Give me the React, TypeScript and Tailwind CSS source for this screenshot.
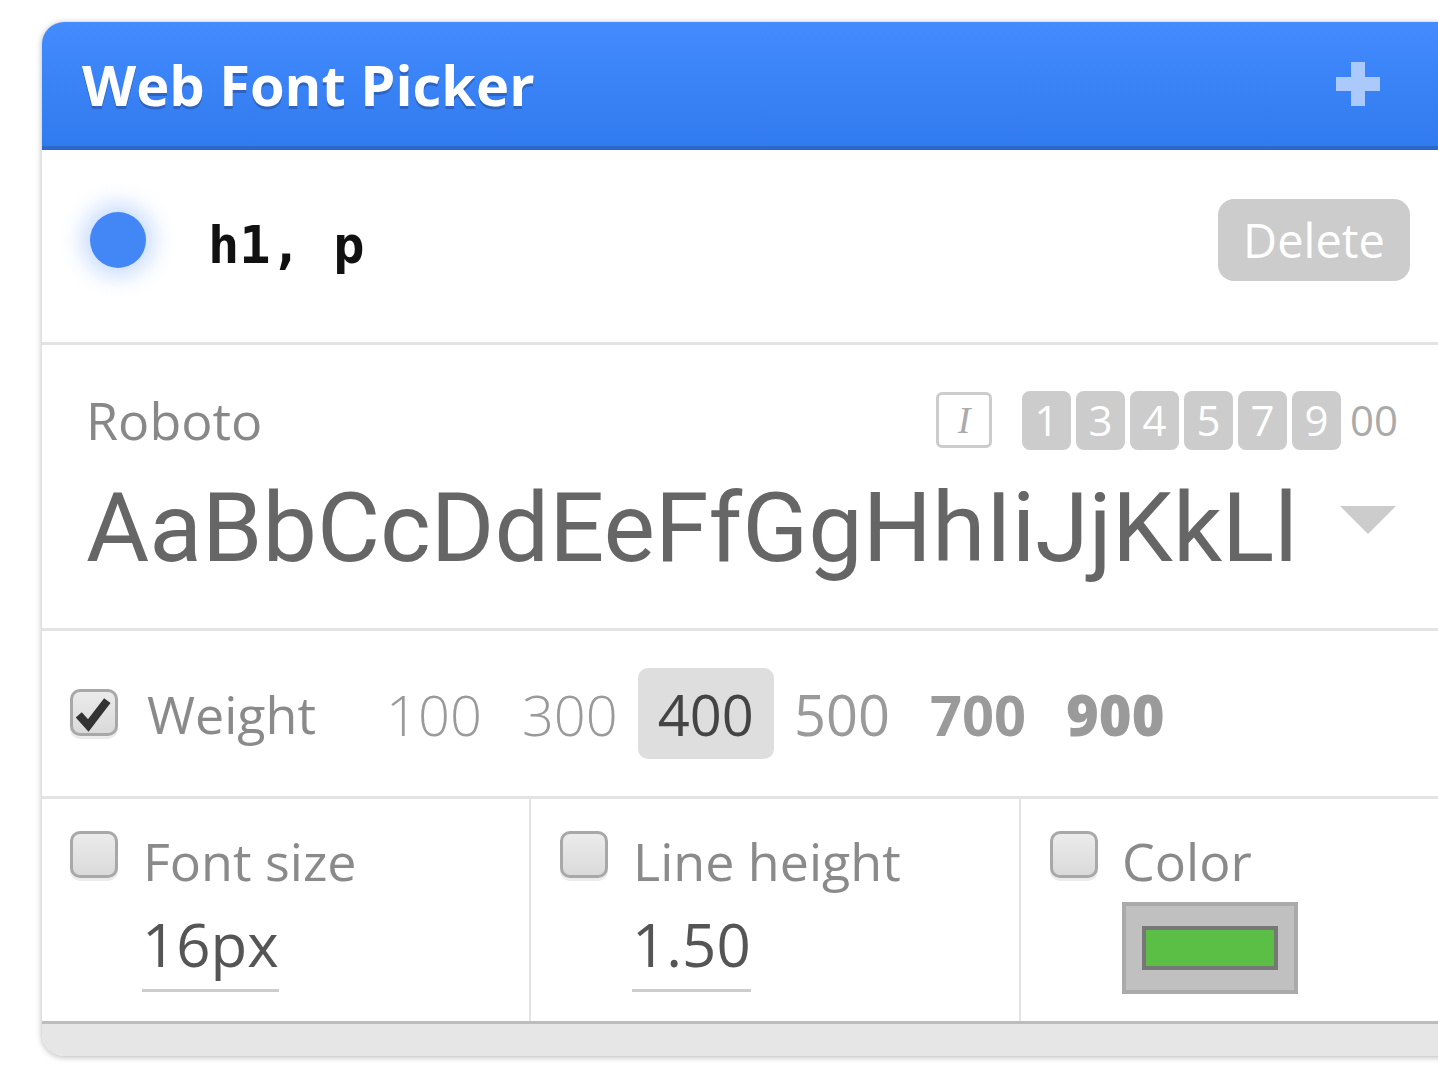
import * as React from 'react';

const sans = "font-['Open_Sans',sans-serif]";

const Checkbox: React.FC<{ checked?: boolean }> = ({ checked }) => (
  <div className="relative h-[50px] w-[48px] shrink-0">
    <div className="absolute inset-x-0 top-[3px] bottom-0 rounded-[10px] bg-[#ececec]" />
    <div className="absolute inset-x-0 top-0 bottom-[3px] rounded-[10px] border-[3px] border-[#a8a8a8] bg-gradient-to-b from-[#ebebeb] to-[#dadada]">
      {checked && (
        <svg viewBox="0 0 42 41" className="absolute left-[1px] top-0 h-[41px] w-[40px]">
          <path d="M5 23 L15 34 L35 8" fill="none" stroke="#333" strokeWidth="8.5" strokeLinejoin="miter" />
        </svg>
      )}
    </div>
  </div>
);

const weights = [
  { label: '100', cls: 'font-light text-[#9a9a9a]' },
  { label: '300', cls: 'font-light text-[#9a9a9a]' },
  { label: '400', cls: 'font-normal text-[#444] bg-[#dedede] rounded-[10px]' },
  { label: '500', cls: 'font-normal text-[#9a9a9a]' },
  { label: '700', cls: 'font-bold text-[#9a9a9a]' },
  { label: '900', cls: 'font-extrabold text-[#9a9a9a]' },
];

const badges = ['1', '3', '4', '5', '7', '9'];

export default function App() {
  return (
    <div className="h-[1078px] w-[1438px] overflow-hidden bg-white">
      <div className="ml-[42px] mt-[22px] w-[1410px] overflow-hidden rounded-l-[22px] bg-white shadow-[0_1px_6px_rgba(0,0,0,0.3)]">
        {/* header */}
        <div className="flex h-[128px] items-center justify-between border-b-4 border-[#2c68c8] bg-gradient-to-b from-[#438bff] to-[#307bef] pl-[40px] pr-[72px]">
          <h1 className={`${sans} text-[56px] font-bold leading-none text-white [text-shadow:0_3px_0_#2d64c2]`}>
            Web Font Picker
          </h1>
          <svg viewBox="0 0 44 44" className="h-[44px] w-[44px]">
            <rect x="15" y="0" width="14" height="44" fill="#acc9fb" />
            <rect x="0" y="15" width="44" height="14" fill="#acc9fb" />
          </svg>
        </div>

        {/* selector row */}
        <div className="flex h-[195px] items-center justify-between border-b-[3px] border-[#e3e3e3] pb-[12px] pl-[48px] pr-[42px]">
          <div className="flex items-center">
            <div className="h-[56px] w-[56px] rounded-full bg-[#4287f5] shadow-[0_0_22px_8px_rgba(66,135,245,0.3)]" />
            <span className="ml-[62px] mt-[10px] font-['DejaVu_Sans_Mono',monospace] text-[52px] font-bold leading-none text-[#111]">
              h1, p
            </span>
          </div>
          <button className={`${sans} h-[82px] w-[192px] rounded-[16px] bg-[#cccccc] text-[47px] leading-none text-white`}>
            Delete
          </button>
        </div>

        {/* family row */}
        <div className="flex h-[286px] flex-col border-b-[3px] border-[#e3e3e3] pl-[46px] pr-[54px] pt-[45px]">
          <div className="flex h-[60px] items-center justify-between">
            <span className={`${sans} ml-[-2px] text-[52px] leading-none text-[#888]`}>Roboto</span>
            <div className="flex items-center">
              <div className="flex h-[56px] w-[56px] items-center justify-center rounded-[6px] border-[3px] border-[#cccccc]">
                <span className="font-['Liberation_Serif',serif] text-[38px] italic leading-none text-[#aaa]">I</span>
              </div>
              <div className="ml-[30px] flex gap-[5px]">
                {badges.map((b) => (
                  <div
                    key={b}
                    className={`${sans} flex h-[59px] w-[49px] items-center justify-center rounded-[8px] bg-[#cccccc] text-[42px] leading-none text-white`}
                  >
                    {b}
                  </div>
                ))}
              </div>
              <span className={`${sans} ml-[9px] text-[42px] leading-none text-[#aaa]`}>00</span>
            </div>
          </div>
          <div className="mt-[18px] flex items-center">
            <div className="ml-[-2px] w-[1217px] overflow-hidden whitespace-nowrap font-['Roboto',sans-serif] text-[97px] leading-[120px] text-[#666]">
              AaBbCcDdEeFfGgHhIiJjKkLlMmNnOoPp
            </div>
            <svg viewBox="0 0 56 28" className="mb-[16px] ml-[37px] h-[28px] w-[56px]">
              <polygon points="0,0 56,0 28,28" fill="#cccccc" />
            </svg>
          </div>
        </div>

        {/* weight row */}
        <div className="flex h-[168px] items-center border-b-[3px] border-[#e3e3e3] pl-[28px]">
          <Checkbox checked />
          <span className={`${sans} ml-[29px] text-[52px] leading-none text-[#8a8a8a]`}>Weight</span>
          <div className="ml-[50px] flex items-center">
            {weights.map((w) => (
              <span key={w.label} className={`${sans} flex h-[91px] items-center px-[20px] text-[56px] leading-none ${w.cls}`}>
                {w.label}
              </span>
            ))}
          </div>
        </div>

        {/* size / line height / color */}
        <div className="flex h-[225px] border-b-[3px] border-[#bcbcbc]">
          <div className="w-[489px] shrink-0 border-r-[2px] border-[#e3e3e3] pl-[28px] pt-[32px]">
            <div className="flex items-start">
              <Checkbox />
              <span className={`${sans} ml-[25px] mt-[4px] text-[52px] leading-[52px] text-[#8a8a8a]`}>Font size</span>
            </div>
            <span className={`${sans} ml-[72px] mt-[12px] block w-fit border-b-[3px] border-[#cccccc] text-[60px] text-[#555]`}>
              16px
            </span>
          </div>
          <div className="w-[490px] shrink-0 border-r-[2px] border-[#e3e3e3] pl-[29px] pt-[32px]">
            <div className="flex items-start">
              <Checkbox />
              <span className={`${sans} ml-[25px] mt-[4px] text-[52px] leading-[52px] text-[#8a8a8a]`}>Line height</span>
            </div>
            <span className={`${sans} ml-[72px] mt-[12px] block w-fit border-b-[3px] border-[#cccccc] text-[60px] text-[#555]`}>
              1.50
            </span>
          </div>
          <div className="flex-1 pl-[29px] pt-[32px]">
            <div className="flex items-start">
              <Checkbox />
              <span className={`${sans} ml-[24px] mt-[4px] text-[52px] leading-[52px] text-[#8a8a8a]`}>Color</span>
            </div>
            <div className="ml-[72px] mt-[15px] h-[92px] w-[176px] border-4 border-[#aaaaaa] bg-[#c0c0c0] pl-[16px] pt-[20px]">
              <div className="h-[44px] w-[136px] border-4 border-[#777] bg-[#5bbf45]" />
            </div>
          </div>
        </div>

        {/* footer strip */}
        <div className="h-[32px] bg-[#e6e6e6]" />
      </div>
    </div>
  );
}
